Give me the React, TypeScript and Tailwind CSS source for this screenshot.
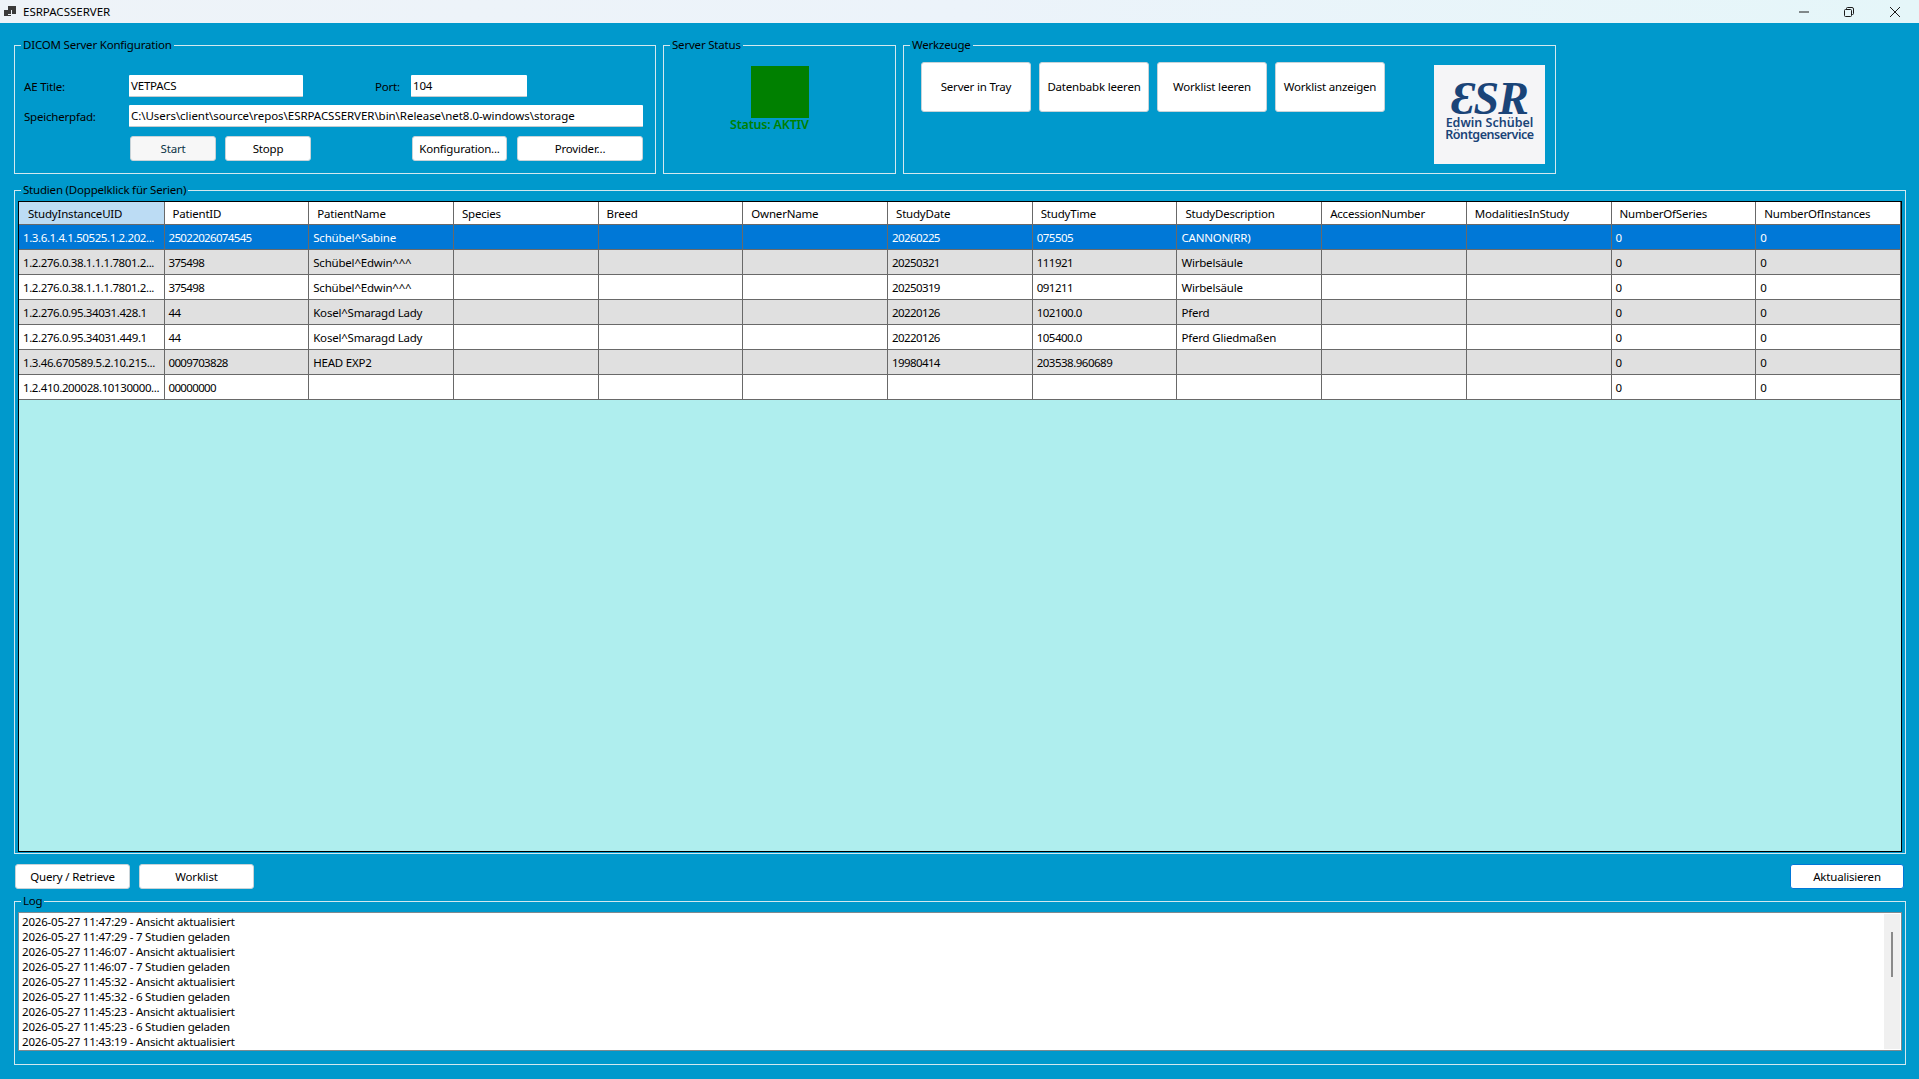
const columns = [
  'StudyInstanceUID',
  'PatientID',
  'PatientName',
  'Species',
  'Breed',
  'OwnerName',
  'StudyDate',
  'StudyTime',
  'StudyDescription',
  'AccessionNumber',
  'ModalitiesInStudy',
  'NumberOfSeries',
  'NumberOfInstances',
];

const rows = [
  ['1.3.6.1.4.1.50525.1.2.202...', '25022026074545', 'Schübel^Sabine', '', '', '', '20260225', '075505', 'CANNON(RR)', '', '', '0', '0'],
  ['1.2.276.0.38.1.1.1.7801.2...', '375498', 'Schübel^Edwin^^^', '', '', '', '20250321', '111921', 'Wirbelsäule', '', '', '0', '0'],
  ['1.2.276.0.38.1.1.1.7801.2...', '375498', 'Schübel^Edwin^^^', '', '', '', '20250319', '091211', 'Wirbelsäule', '', '', '0', '0'],
  ['1.2.276.0.95.34031.428.1', '44', 'Kosel^Smaragd Lady', '', '', '', '20220126', '102100.0', 'Pferd', '', '', '0', '0'],
  ['1.2.276.0.95.34031.449.1', '44', 'Kosel^Smaragd Lady', '', '', '', '20220126', '105400.0', 'Pferd Gliedmaßen', '', '', '0', '0'],
  ['1.3.46.670589.5.2.10.215...', '0009703828', 'HEAD EXP2', '', '', '', '19980414', '203538.960689', '', '', '', '0', '0'],
  ['1.2.410.200028.10130000...', '00000000', '', '', '', '', '', '', '', '', '', '0', '0'],
];

// digits in the picture run narrower than the fallback font
const cellTracking: Record<number, string> = {
  0: 'tracking-[-0.4px]',
  1: 'tracking-[-0.65px]',
  6: 'tracking-[-0.6px]',
  7: 'tracking-[-0.5px]',
};

const logLines = [
  '2026-05-27 11:47:29 - Ansicht aktualisiert',
  '2026-05-27 11:47:29 - 7 Studien geladen',
  '2026-05-27 11:46:07 - Ansicht aktualisiert',
  '2026-05-27 11:46:07 - 7 Studien geladen',
  '2026-05-27 11:45:32 - Ansicht aktualisiert',
  '2026-05-27 11:45:32 - 6 Studien geladen',
  '2026-05-27 11:45:23 - Ansicht aktualisiert',
  '2026-05-27 11:45:23 - 6 Studien geladen',
  '2026-05-27 11:43:19 - Ansicht aktualisiert',
];

function GroupBox({ title, className, children }: { title: string; className: string; children: React.ReactNode }) {
  return (
    <fieldset className={`border border-[#d3e8ef] ${className}`}>
      <legend className="ml-[6px] h-4 px-[2px] text-[11.5px] leading-4 text-black">{title}</legend>
      {children}
    </fieldset>
  );
}

function Btn({ label, className, muted }: { label: string; className: string; muted?: boolean }) {
  return (
    <button
      className={`rounded-[3px] border border-[#c8d3d8] text-center text-[11.5px] ${
        muted ? 'bg-[#f7f7f7] text-[#0b3345]' : 'bg-white text-black'
      } ${className}`}
    >
      {label}
    </button>
  );
}

function TextField({ value, className }: { value: string; className: string }) {
  return (
    <div className={`flex h-[22px] items-center rounded-[1px] border-b border-[#c4ccd0] bg-white pl-[2px] text-[11.5px] text-black ${className}`}>
      {value}
    </div>
  );
}

function WindowControls() {
  return (
    <div className="flex items-center">
      <svg width="10" height="10" viewBox="0 0 10 10" className="mr-[35px]">
        <path d="M0 5h10" stroke="#1a1a1a" strokeWidth="1" />
      </svg>
      <svg width="10" height="10" viewBox="0 0 10 10" className="mr-[36px]">
        <path d="M2.5 2.5V1.5a1 1 0 0 1 1-1h4.5a1.5 1.5 0 0 1 1.5 1.5v4.5a1 1 0 0 1-1 1H7.5" fill="none" stroke="#1a1a1a" />
        <rect x="0.5" y="2.5" width="7" height="7" rx="1" fill="none" stroke="#1a1a1a" />
      </svg>
      <svg width="10" height="10" viewBox="0 0 10 10" className="mr-[19px]">
        <path d="M0 0l10 10M10 0L0 10" stroke="#1a1a1a" strokeWidth="1" />
      </svg>
    </div>
  );
}

export default function App() {
  return (
    <div className="flex h-[1079px] w-[1919px] flex-col overflow-hidden bg-[#0099cc] font-['Noto_Sans',sans-serif] text-[11.5px] tracking-[-0.2px]">
      <div className="flex h-[23px] shrink-0 items-center justify-between bg-gradient-to-r from-[#eef3f8] via-[#ecf3fa] to-[#e5f6f9]">
        <div className="flex items-center">
          <svg width="13" height="11" viewBox="0 0 13 11" className="ml-1">
            <rect x="4" y="0" width="8" height="8" fill="#3a3a3a" />
            <rect x="0" y="4" width="7" height="6" fill="#3a3a3a" />
            <path d="M7.5 4v4.5H4" fill="none" stroke="#eef3f8" strokeWidth="1" />
          </svg>
          <span className="ml-[6px] text-[11.5px] tracking-normal text-black">ESRPACSSERVER</span>
        </div>
        <WindowControls />
      </div>

      <div className="flex flex-col px-[14px] pt-[14px]">
        <div className="flex h-[137px] gap-[7px]">
          <GroupBox title="DICOM Server Konfiguration" className="w-[642px]">
            <div className="flex flex-col pl-[9px] pt-[22px]">
              <div className="flex items-center">
                <span className="w-[105px] pt-[2px]">AE Title:</span>
                <TextField value="VETPACS" className="w-[174px]" />
                <span className="ml-[72px] w-[36px] pt-[2px]">Port:</span>
                <TextField value="104" className="w-[116px]" />
              </div>
              <div className="mt-2 flex items-center">
                <span className="w-[105px] pt-[2px]">Speicherpfad:</span>
                <TextField
                  value="C:\Users\client\source\repos\ESRPACSSERVER\bin\Release\net8.0-windows\storage"
                  className="w-[514px] tracking-[-0.05px]"
                />
              </div>
              <div className="mt-[9px] flex pl-[106px]">
                <Btn label="Start" muted className="h-[25px] w-[86px]" />
                <Btn label="Stopp" className="ml-[9px] h-[25px] w-[86px]" />
                <Btn label="Konfiguration..." className="ml-[101px] h-[25px] w-[95px]" />
                <Btn label="Provider..." className="ml-[10px] h-[25px] w-[126px]" />
              </div>
            </div>
          </GroupBox>

          <GroupBox title="Server Status" className="w-[233px]">
            <div className="mt-[13px] ml-[87px] h-[52px] w-[58px] bg-[#008000]" />
            <div className="ml-[66px] text-[12.5px] leading-[13px] font-semibold text-[#008000]">Status: AKTIV</div>
          </GroupBox>

          <GroupBox title="Werkzeuge" className="w-[653px]">
            <div className="flex items-start pl-[17px] pt-[9px]">
              <Btn label="Server in Tray" className="h-[50px] w-[110px]" />
              <Btn label="Datenbabk leeren" className="ml-2 h-[50px] w-[110px]" />
              <Btn label="Worklist leeren" className="ml-2 h-[50px] w-[110px]" />
              <Btn label="Worklist anzeigen" className="ml-2 h-[50px] w-[110px]" />
              <div className="mt-[3px] ml-[49px] flex h-[99px] w-[111px] flex-col items-center bg-[#f5f5f7] pt-[16px] text-[#1a4478]">
                <span className="font-['Liberation_Serif',serif] text-[46px] leading-[35px] font-bold italic tracking-[-1px]">ƐSR</span>
                <span className="mt-px text-[12.5px] leading-[12px] font-semibold tracking-normal">Edwin Schübel</span>
                <span className="text-[12.5px] leading-[12px] font-semibold tracking-[-0.45px]">Röntgenservice</span>
              </div>
            </div>
          </GroupBox>
        </div>

        <GroupBox title="Studien (Doppelklick für Serien)" className="mt-2 h-[672px] w-[1892px]">
          <div className="mx-[3px] mt-[3px] h-[651px] border border-black bg-[#afeeee]">
            <table className="w-full table-fixed border-separate border-spacing-0 text-[11.5px] text-black">
              <thead>
                <tr>
                  {columns.map((col, index) => (
                    <th
                      key={col}
                      className={`h-[23px] border-r border-b border-[#696969] pt-px text-left font-normal whitespace-nowrap ${
                        index === 0 ? 'w-[145.5px] bg-[#bcdcf4] pl-[9px]' : 'bg-white pl-2'
                      }`}
                    >
                      {col}
                    </th>
                  ))}
                </tr>
              </thead>
              <tbody>
                {rows.map((row, rowIndex) => (
                  <tr key={rowIndex}>
                    {row.map((cell, cellIndex) => (
                      <td
                        key={cellIndex}
                        className={`h-[25px] overflow-hidden border-r border-b border-[#696969] pt-[2px] pl-1 whitespace-nowrap ${
                          cellTracking[cellIndex] ?? ''
                        } ${
                          rowIndex === 0
                            ? 'bg-[#0078d7] text-white'
                            : rowIndex % 2 === 1
                              ? 'bg-[#e0e0e0]'
                              : 'bg-white'
                        }`}
                      >
                        {cell}
                      </td>
                    ))}
                  </tr>
                ))}
              </tbody>
            </table>
          </div>
        </GroupBox>

        <div className="mt-[10px] flex h-[25px] w-[1890px]">
          <Btn label="Query / Retrieve" className="ml-px h-[25px] w-[115px]" />
          <Btn label="Worklist" className="ml-[9px] h-[25px] w-[115px]" />
          <button className="ml-auto h-[25px] w-[114px] rounded-[3px] border border-[#0078d7] bg-white text-[11.5px] text-black">
            Aktualisieren
          </button>
        </div>

        <GroupBox title="Log" className="mt-1 h-[172px] w-[1892px]">
          <div className="mx-[3px] mt-[3px] flex h-[139px] border border-[#7f8a90] bg-white">
            <div className="flex-1 pl-[3px] pt-px">
              {logLines.map((line, index) => (
                <div key={index} className="h-[15px] text-[11.5px] leading-[15px] text-black">
                  {line}
                </div>
              ))}
            </div>
            <div className="my-px mr-px flex w-4 justify-center bg-[#f0f0f0] pt-[18px]">
              <div className="h-[45px] w-[2px] bg-[#8a8a8a]" />
            </div>
          </div>
        </GroupBox>
      </div>
    </div>
  );
}
